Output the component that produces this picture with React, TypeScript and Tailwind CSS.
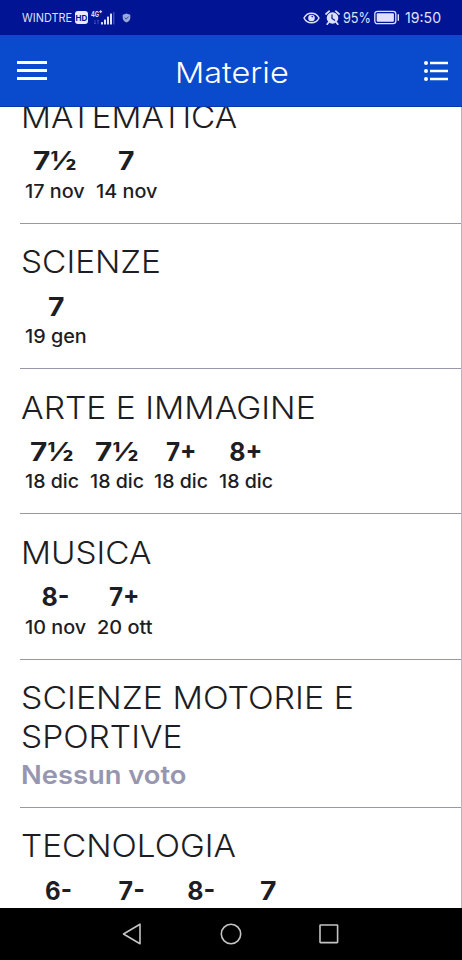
import { useLayoutEffect, useRef, useState } from "react";

/** Single line of text stretched horizontally to a given width. */
function Fit({ text, width, className = "" }: { text: string; width: number; className?: string }) {
  const ref = useRef<HTMLSpanElement>(null);
  const [scale, setScale] = useState(1);
  useLayoutEffect(() => {
    if (ref.current) setScale(width / ref.current.offsetWidth);
  }, [text, width]);
  return (
    <span className={`block ${className}`} style={{ width }}>
      <span ref={ref} className="inline-block origin-left whitespace-nowrap" style={{ transform: `scaleX(${scale})` }}>
        {text}
      </span>
    </span>
  );
}

type Grade = { value: string; w: number; date?: string; dw: number };
type Subject = { lines: { text: string; w: number }[]; grades: Grade[] };

const subjects: Subject[] = [
  {
    lines: [{ text: "MATEMATICA", w: 216 }],
    grades: [
      { value: "7½", w: 44, date: "17 nov", dw: 60 },
      { value: "7", w: 17, date: "14 nov", dw: 61 },
    ],
  },
  { lines: [{ text: "SCIENZE", w: 140 }], grades: [{ value: "7", w: 17, date: "19 gen", dw: 62 }] },
  {
    lines: [{ text: "ARTE E IMMAGINE", w: 295 }],
    grades: [
      { value: "7½", w: 44, date: "18 dic", dw: 54 },
      { value: "7½", w: 44, date: "18 dic", dw: 54 },
      { value: "7+", w: 31, date: "18 dic", dw: 54 },
      { value: "8+", w: 33, date: "18 dic", dw: 54 },
    ],
  },
  {
    lines: [{ text: "MUSICA", w: 130 }],
    grades: [
      { value: "8-", w: 28, date: "10 nov", dw: 61 },
      { value: "7+", w: 31, date: "20 ott", dw: 56 },
    ],
  },
  {
    lines: [
      { text: "SCIENZE MOTORIE E", w: 333 },
      { text: "SPORTIVE", w: 161 },
    ],
    grades: [],
  },
  {
    lines: [{ text: "TECNOLOGIA", w: 215 }],
    grades: [
      { value: "6-", w: 27, dw: 66 },
      { value: "7-", w: 26, dw: 60 },
      { value: "8-", w: 28, dw: 58 },
      { value: "7", w: 17, dw: 56 },
    ],
  },
];

function StatusBar() {
  return (
    <div className="flex h-[35px] shrink-0 items-center bg-[#001494] pl-[22px] pr-[21px] text-[#dce0fa]">
      <Fit text="WINDTRE" width={50} className="text-[12px] leading-[18px]" />
      <div className="ml-[3px] flex h-[13px] w-[13px] items-center justify-center rounded-[3px] bg-[#e9ebfb] text-[8px] font-bold text-[#001494]">
        HD
      </div>
      <svg className="ml-[3px]" width="25" height="18" viewBox="0 0 25 18" fill="currentColor">
        <text x="0" y="7.5" fontSize="8" fontWeight="700" textLength="8" lengthAdjust="spacingAndGlyphs">4G</text>
        <path d="M8.2 2.7h3M9.7 1.2v3" stroke="currentColor" strokeWidth="1" />
        <path d="M4 11v4M7 11v4M3 14l1 1 1-1M6 12l1-1 1 1" stroke="#4652b5" strokeWidth=".8" fill="none" />
        <rect x="10" y="13" width="2" height="2.5" rx=".5" />
        <rect x="13" y="10.5" width="2" height="5" rx=".5" />
        <rect x="16" y="7.5" width="2" height="8" rx=".5" />
        <rect x="19" y="4.5" width="2" height="11" rx=".5" />
        <rect x="22" y="3" width="1.5" height="12.5" rx=".5" fill="#3c4aaf" />
      </svg>
      <svg className="ml-[6px]" width="9" height="10" viewBox="0 0 9 10">
        <path d="M4.5.5 8.3 1.8v3C8.3 7 6.6 8.7 4.5 9.5 2.4 8.7.7 7 .7 4.8v-3z" fill="#98a8dd" />
        <path d="m2.7 4.7 1.4 1.4 2.4-2.5" fill="none" stroke="#3046a8" strokeWidth="1" />
      </svg>
      <svg className="ml-auto" width="17" height="12" viewBox="0 0 17 12" fill="none">
        <path d="M1 6C2.6 2.8 5.3 1.2 8.5 1.2S14.4 2.8 16 6c-1.6 3.2-4.3 4.8-7.5 4.8S2.6 9.2 1 6Z" stroke="currentColor" strokeWidth="1.5" />
        <circle cx="8.5" cy="6" r="3.3" fill="currentColor" />
        <circle cx="9.2" cy="4.6" r=".8" fill="#001494" />
      </svg>
      <svg className="ml-[5px]" width="15" height="15" viewBox="0 0 15 15" fill="none">
        <circle cx="7.5" cy="8" r="5.8" fill="currentColor" />
        <path d="M1 4 4.2 1.2M14 4l-3.2-2.8M3.5 12.5l-1.3 1.7M11.5 12.5l1.3 1.7" stroke="currentColor" strokeWidth="1.7" strokeLinecap="round" />
        <path d="M7 4.5v4l3 2" stroke="#001494" strokeWidth="1.2" />
      </svg>
      <Fit text="95%" width={28} className="ml-[3px] text-[14.5px] leading-[20px]" />
      <svg className="ml-[3px]" width="26" height="15" viewBox="0 0 26 15" fill="none">
        <rect x=".8" y="1.3" width="21" height="12.4" rx="2.6" stroke="currentColor" strokeWidth="1.3" />
        <rect x="2.7" y="3.2" width="17.2" height="8.6" rx="1" fill="currentColor" />
        <path d="M24.3 4.8v5.4" stroke="currentColor" strokeWidth="1.4" strokeLinecap="round" />
      </svg>
      <Fit text="19:50" width={36} className="ml-[5px] text-[14.5px] leading-[20px]" />
    </div>
  );
}

function AppBar() {
  return (
    <header className="flex h-[72px] shrink-0 items-center border-b border-[#0739ad] bg-[#0a4bce] pl-[17px] pr-[14px] text-white">
      <div className="flex w-[30px] flex-col gap-[5px]">
        <div className="h-[3px] bg-white" />
        <div className="h-[3px] bg-white" />
        <div className="h-[3px] bg-white" />
      </div>
      <Fit text="Materie" width={114} className="ml-[128px] mt-[4px] text-[28.5px] leading-[40px] font-light" />
      <svg className="ml-auto" width="24" height="20" viewBox="0 0 24 20" fill="white">
        <circle cx="2" cy="2" r="2" />
        <circle cx="2" cy="10" r="2" />
        <circle cx="2" cy="18" r="2" />
        <path d="M6 .8h18v2.4H6zM6 8.8h18v2.4H6zM6 16.8h18v2.4H6z" />
      </svg>
    </header>
  );
}

function SubjectRow({ subject }: { subject: Subject }) {
  const empty = subject.grades.length === 0;
  return (
    <section
      className={`ml-[20px] shrink-0 border-b border-[#9697a9] pt-[18.6px] ${empty ? "h-[148.3px]" : "h-[145.3px]"}`}
    >
      <h2 className="pl-px text-[31px] leading-[39px] font-light">
        {subject.lines.map((l) => (
          <Fit key={l.text} text={l.text} width={l.w} />
        ))}
      </h2>
      {empty ? (
        <Fit text="Nessun voto" width={165} className="ml-px mt-[3px] text-[25.5px] leading-[32px] font-semibold text-[#9696b0]" />
      ) : (
        <div className="flex gap-[10.6px] pl-[5px] pt-[13.4px]">
          {subject.grades.map((g, i) => (
            <div key={i} className="flex flex-col items-center" style={{ minWidth: g.dw }}>
              <Fit text={g.value} width={g.w} className="text-[25px] leading-[25px] font-bold" />
              {g.date && (
                <Fit text={g.date} width={g.dw} className="mt-[6.5px] text-[18.5px] leading-[20px] font-medium" />
              )}
            </div>
          ))}
        </div>
      )}
    </section>
  );
}

export default function App() {
  return (
    <div className="flex h-[960px] w-[462px] flex-col overflow-hidden bg-white font-['Inter',sans-serif] text-[#1d1d24]">
      <StatusBar />
      <AppBar />
      <main className="min-h-0 flex-1 overflow-hidden border-r border-[#b4b5c4]">
        <div className="-mt-[28.6px] flex flex-col">
          {subjects.map((s) => (
            <SubjectRow key={s.lines[0].text} subject={s} />
          ))}
        </div>
      </main>
      <nav className="flex h-[52px] shrink-0 items-center justify-between bg-black pl-[122px] pr-[123px]">
        <svg width="20" height="22" viewBox="0 0 20 22" fill="none" stroke="#c4c4c4" strokeWidth="1.6" strokeLinejoin="round">
          <path d="M18 1.2v19.6L1.5 11z" />
        </svg>
        <svg width="22" height="22" viewBox="0 0 22 22" fill="none" stroke="#c4c4c4" strokeWidth="1.6">
          <circle cx="11" cy="11" r="9.7" />
        </svg>
        <svg width="20" height="20" viewBox="0 0 20 20" fill="none" stroke="#c4c4c4" strokeWidth="1.6">
          <rect x="1" y="1" width="17.6" height="17.6" rx=".5" />
        </svg>
      </nav>
    </div>
  );
}
